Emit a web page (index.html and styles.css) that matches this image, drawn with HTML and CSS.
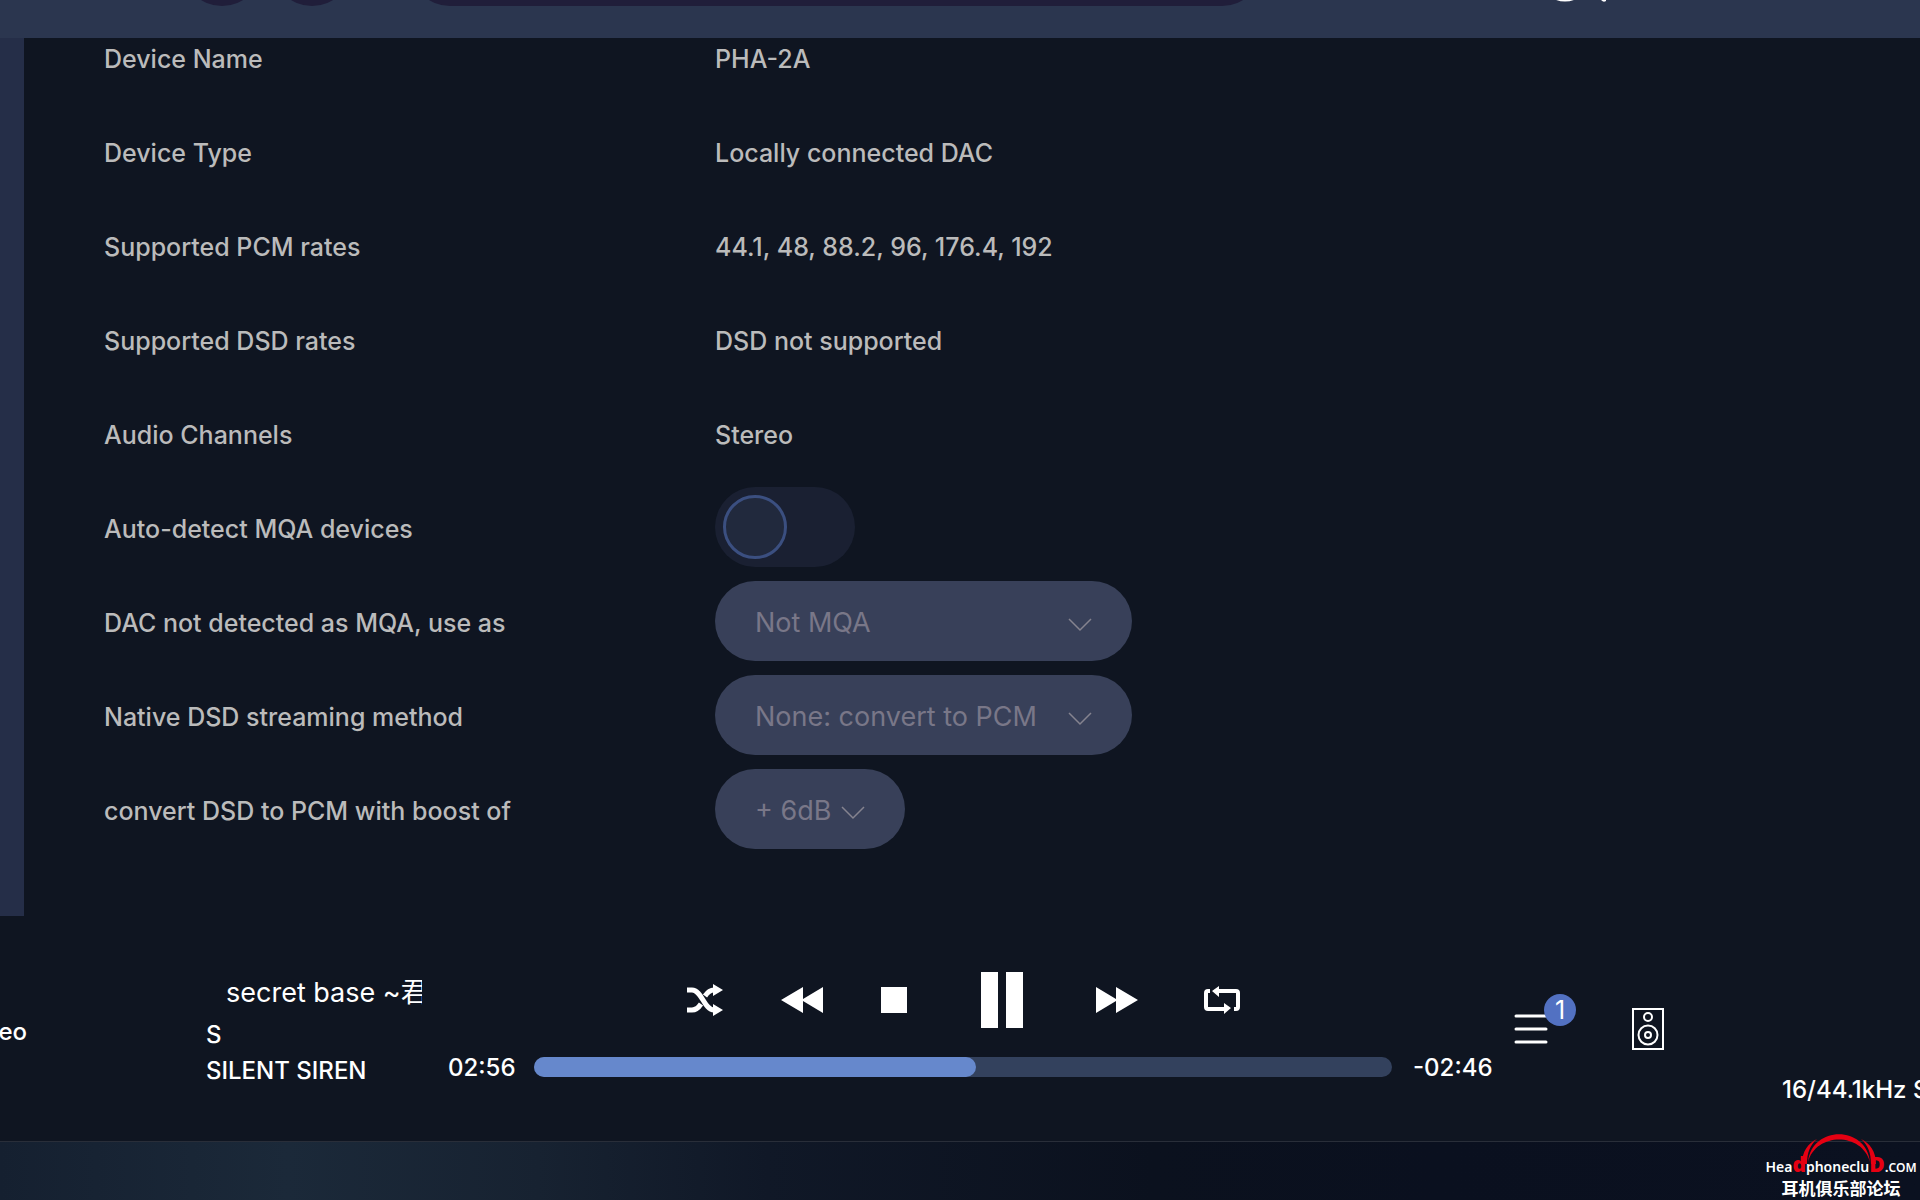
FILE: index.html
```html
<!DOCTYPE html>
<html lang="en">
<head>
    <meta charset="UTF-8">
    <meta name="viewport" content="width=device-width, initial-scale=1.0">
    <title>Audio device settings</title>
    <link rel="stylesheet" href="styles.css">
</head>
<body>
    <header class="topbar">
        <button class="round-btn" aria-label="Back"></button>
        <button class="round-btn" aria-label="Forward"></button>
        <input class="search-box" type="text" aria-label="Search">
        <button class="icon-btn search-btn" aria-label="Find">
            <svg width="60" height="60" viewBox="0 0 60 60" fill="none" stroke="#fff" stroke-width="7" stroke-linecap="round">
                <circle cx="19" cy="34" r="22"/>
                <path d="M49 46l9 10"/>
            </svg>
        </button>
    </header>

    <main class="content">
        <div class="sidebar"></div>
        <form class="settings">
            <div class="row"><span class="name">Device Name</span><span class="value">PHA-2A</span></div>
            <div class="row"><span class="name">Device Type</span><span class="value">Locally connected DAC</span></div>
            <div class="row"><span class="name">Supported PCM rates</span><span class="value">44.1, 48, 88.2, 96, 176.4, 192</span></div>
            <div class="row"><span class="name">Supported DSD rates</span><span class="value">DSD not supported</span></div>
            <div class="row"><span class="name">Audio Channels</span><span class="value">Stereo</span></div>
            <div class="row">
                <label class="name" for="autoMqa">Auto-detect MQA devices</label>
                <input class="toggle" type="checkbox" id="autoMqa" disabled>
            </div>
            <div class="row">
                <label class="name" for="mqaUse">DAC not detected as MQA, use as</label>
                <div class="select-wrap wide">
                    <select id="mqaUse" disabled><option>Not MQA</option></select>
                    <svg class="chevron" width="24" height="14" viewBox="0 0 24 14"><path d="M1 1l11 11L23 1"/></svg>
                </div>
            </div>
            <div class="row">
                <label class="name" for="dsdMethod">Native DSD streaming method</label>
                <div class="select-wrap wide">
                    <select id="dsdMethod" disabled><option>None: convert to PCM</option></select>
                    <svg class="chevron" width="24" height="14" viewBox="0 0 24 14"><path d="M1 1l11 11L23 1"/></svg>
                </div>
            </div>
            <div class="row">
                <label class="name" for="dsdBoost">convert DSD to PCM with boost of</label>
                <div class="select-wrap short">
                    <select id="dsdBoost" disabled><option>+ 6dB</option></select>
                    <svg class="chevron" width="24" height="14" viewBox="0 0 24 14"><path d="M1 1l11 11L23 1"/></svg>
                </div>
            </div>
        </form>
    </main>

    <footer class="player">
        <div class="format-left">eo</div>
        <div class="track">
            <div class="title">secret base ~君</div>
            <div class="album">S</div>
            <div class="artist">SILENT SIREN</div>
        </div>
        <div class="transport">
            <div class="buttons">
                <button class="icon-btn" aria-label="Shuffle">
                    <svg width="36" height="32" viewBox="0 0 36 32">
                        <path d="M0 26h5c4 0 7-3 9-6M18 12c2-3 5-6 9-6" fill="none" stroke="#fff" stroke-width="5"/>
                        <path d="M0 6h5c10 0 12 20 22 20" fill="none" stroke="#fff" stroke-width="5"/>
                        <path d="M26 0l10 6-10 6zM26 20l10 6-10 6z" fill="#fff"/>
                    </svg>
                </button>
                <button class="icon-btn" aria-label="Previous">
                    <svg width="42" height="26" viewBox="0 0 42 26"><path d="M0 13L22 0v12L42 0v26L22 14v12z" fill="#fff"/></svg>
                </button>
                <button class="icon-btn" aria-label="Stop">
                    <svg width="26" height="26" viewBox="0 0 26 26"><path d="M0 0h26v26H0z" fill="#fff"/></svg>
                </button>
                <button class="icon-btn pause" aria-label="Pause">
                    <svg width="42" height="56" viewBox="0 0 42 56"><path d="M0 0h17v56H0zM25 0h17v56H25z" fill="#fff"/></svg>
                </button>
                <button class="icon-btn" aria-label="Next">
                    <svg width="42" height="26" viewBox="0 0 42 26"><path d="M42 13L20 0v12L0 0v26l20-12v12z" fill="#fff"/></svg>
                </button>
                <button class="icon-btn repeat" aria-label="Repeat">
                    <svg width="36" height="28" viewBox="0 0 36 28">
                        <path d="M6 5H4q-2 0-2 2v14q0 2 2 2h17M30 23h2q2 0 2-2V7q0-2-2-2H14" fill="none" stroke="#fff" stroke-width="4"/>
                        <path d="M15 0v11L8 5zM20 17v11l7-6z" fill="#fff"/>
                    </svg>
                </button>
            </div>
            <div class="timeline">
                <span class="time">02:56</span>
                <div class="bar"><div class="bar-fill" style="width: 51.5%"></div></div>
                <span class="time right">-02:46</span>
            </div>
        </div>
        <div class="extras">
            <button class="icon-btn queue" aria-label="Queue">
                <svg width="34" height="32" viewBox="0 0 34 32" stroke="#fff" stroke-width="3" stroke-linecap="round"><path d="M2 3h30M2 16h30M2 29h30"/></svg>
                <span class="badge">1</span>
            </button>
            <button class="icon-btn" aria-label="Output device">
                <svg width="32" height="42" viewBox="0 0 32 42" fill="none" stroke="#fff" stroke-width="2">
                    <path d="M1 1h30v40H1z"/>
                    <circle cx="16" cy="9" r="4"/>
                    <circle cx="16" cy="27" r="9.500"/>
                    <circle cx="16" cy="27" r="3"/>
                </svg>
            </button>
        </div>
        <div class="format-right">16/44.1kHz&nbsp;S</div>
    </footer>

    <div class="desktop">
        <div class="watermark">
            <svg class="arc" width="74" height="30" viewBox="0 0 74 30" fill="#e60012">
                <path d="M6 28C10 -9 64 -9 68 28C60 -2 14 -2 6 28z"/>
                <path d="M0 30C0 18 6 9 15 5C8 11 5 19 5 30zM74 30C74 18 68 9 59 5C66 11 69 19 69 30z"/>
            </svg>
            <div class="site">Hea<b>d</b>phoneclu<b>D</b>.<small>COM</small></div>
            <div class="club">耳机俱乐部论坛</div>
        </div>
    </div>
</body>
</html>
```
FILE: styles.css
```css
* {
    box-sizing: border-box;
}
body {
    margin: 0;
    height: 100vh;
    display: flex;
    flex-direction: column;
    overflow: hidden;
    background: #0f1521;
    color: #fff;
    font-family: Inter, "Noto Sans CJK SC", sans-serif;
    font-size: 25px;
    line-height: 32px;
}

/* top bar, scrolled mostly out of view */
.topbar {
    flex: none;
    height: 38px;
    display: flex;
    align-items: flex-end;
    gap: 10px;
    padding: 0 314px 32px 182px;
    background: #2b364f;
    overflow: hidden;
}
.round-btn {
    flex: none;
    width: 80px;
    height: 80px;
    border: none;
    border-radius: 50%;
    background: #201e3a;
}
.search-box {
    flex: 1;
    height: 80px;
    margin-left: 48px;
    border: none;
    border-radius: 40px;
    background: #201e3a;
}
.icon-btn {
    flex: none;
    display: flex;
    padding: 0;
    border: none;
    background: none;
}
.search-btn {
    margin: 0 0 4px 274px;
}

.content {
    flex: 1;
    min-height: 0;
    display: flex;
    overflow: hidden;
}
.sidebar {
    flex: none;
    width: 24px;
    background: #252e48;
}
.settings {
    flex: 1;
    margin-top: -28px;
    padding-left: 80px;
}
.row {
    display: flex;
    align-items: center;
    height: 94px;
    color: #bbb;
    font-weight: 500;
}
.name, .value {
    padding-top: 3px;
}
.name {
    flex: none;
    width: 611px;
}
.toggle {
    appearance: none;
    width: 140px;
    height: 80px;
    margin: 0;
    padding: 8px;
    border-radius: 40px;
    background: #1a2032;
}
.toggle::before {
    content: "";
    display: block;
    width: 58px;
    height: 58px;
    border: 3px solid #3b4f80;
    border-radius: 50%;
    background: #21293d;
}
.select-wrap {
    position: relative;
}
.wide {
    width: 417px;
}
.short {
    width: 190px;
}
select {
    appearance: none;
    width: 100%;
    height: 80px;
    padding: 2px 40px 0;
    border: none;
    border-radius: 40px;
    background: #384059;
    color: #797788;
    font-family: inherit;
    font-size: 27px;
    opacity: 1;
}
.chevron {
    position: absolute;
    right: 40px;
    top: 37px;
    fill: none;
    stroke: #85838f;
    stroke-width: 1.5;
}

.player {
    flex: none;
    display: flex;
    height: 225px;
    font-size: 24px;
    font-weight: 500;
}
.format-left {
    flex: none;
    display: flex;
    justify-content: flex-end;
    width: 27px;
    padding-top: 100px;
    overflow: hidden;
}
.track {
    flex: none;
    width: 241px;
    padding: 57px 0 0 179px;
    white-space: nowrap;
}
.title {
    width: 216px;
    padding-left: 20px;
    margin-bottom: 4px;
    overflow: hidden;
    font-size: 27px;
    font-weight: 400;
    line-height: 40px;
}
.album, .artist {
    line-height: 36px;
}
.transport {
    flex: 1;
    padding: 54px 0 0 180px;
}
.buttons {
    display: flex;
    align-items: center;
    height: 60px;
    padding-left: 239px;
    gap: 58px;
}
.pause {
    margin: 0 15px 0 16px;
}
.repeat {
    margin-left: 8px;
}
.timeline {
    display: flex;
    align-items: center;
    margin-top: 20px;
}
.time {
    flex: none;
    width: 86px;
    padding-top: 2px;
}
.time.right {
    width: 100px;
    padding-left: 21px;
}
.bar {
    flex: 1;
    height: 20px;
    border-radius: 10px;
    background: #33415d;
}
.bar-fill {
    height: 20px;
    border-radius: 10px;
    background: #6688cc;
}
.extras {
    flex: none;
    display: flex;
    align-items: flex-start;
    gap: 84px;
    padding: 92px 0 0 22px;
}
.queue {
    position: relative;
    padding-top: 5px;
}
.badge {
    position: absolute;
    left: 30px;
    top: -14px;
    width: 32px;
    height: 32px;
    border-radius: 50%;
    background: #5271c2;
    color: #fff;
    font-family: Inter, sans-serif;
    font-size: 25px;
    line-height: 32px;
}
.format-right {
    flex: none;
    width: 256px;
    padding: 158px 0 0 118px;
    white-space: nowrap;
    overflow: hidden;
}

/* strip of wallpaper under the window */
.desktop {
    flex: none;
    height: 59px;
    display: flex;
    justify-content: flex-end;
    border-top: 1px solid #292e39;
    background: linear-gradient(90deg, #152030 0%, #1b2939 15%, #172231 28%, #101827 40%, #0b111e 60%, #0a101f 75%, #0b1120 100%);
}
.watermark {
    position: relative;
    width: 158px;
    padding-top: 14px;
    text-align: center;
}
.arc {
    position: absolute;
    left: 40px;
    top: -8px;
}
.site {
    font-family: "Noto Sans", sans-serif;
    font-size: 14px;
    font-weight: 600;
    line-height: 20px;
    white-space: nowrap;
}
.site b {
    color: #e60012;
    font-size: 21px;
    font-weight: 900;
    line-height: 16px;
}
.site small {
    font-size: 12px;
}
.club {
    font-family: "Noto Sans CJK SC", sans-serif;
    font-size: 17px;
    font-weight: 700;
    line-height: 20px;
}
```
